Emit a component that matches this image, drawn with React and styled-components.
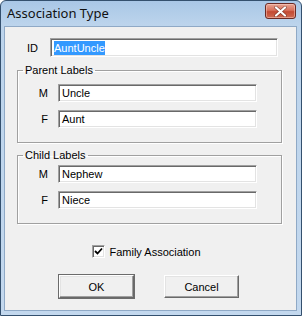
import React from "react";
import styled, { createGlobalStyle } from "styled-components";

const Global = createGlobalStyle`
  html, body { margin: 0; padding: 0; background: #ffffff; }
  * { box-sizing: border-box; }
`;

const Frame = styled.div`
  width: 302px;
  height: 316px;
  display: flex;
  flex-direction: column;
  border: 1px solid #34506e;
  border-radius: 6px 6px 0 0;
  background: linear-gradient(180deg, #a9c7e6 0px, #bcd4ec 24px, #c3d8ee 100%);
  padding: 0 4px 4px 3px;
  font-family: "Liberation Sans", Arial, sans-serif;
  font-size: 11px;
  color: #000;
`;

const TitleBar = styled.div`
  height: 25px;
  flex: none;
  display: flex;
  align-items: center;
  justify-content: space-between;
  padding: 0 1px 1px 3px;
`;

const Title = styled.span`
  font-family: "Noto Sans", "Open Sans", sans-serif;
  font-size: 13px;
  color: #111;
`;

const Close = styled.div`
  width: 31px;
  height: 16px;
  margin-top: -4px;
  border: 1px solid #6b2a24;
  border-radius: 3px;
  background: linear-gradient(180deg, #e8a493 0%, #d7705b 45%, #c34a33 55%, #cf6b53 100%);
  box-shadow: inset 0 0 0 1px rgba(255, 220, 210, 0.45);
  display: flex;
  align-items: center;
  justify-content: center;
`;

const Client = styled.div`
  flex: 1;
  background: #f0f0f0;
  border: 1px solid #8fa9c6;
  display: flex;
  flex-direction: column;
  padding: 11px 14px 0 12px;
`;

const Row = styled.div`
  display: flex;
  align-items: center;
`;

const Label = styled.span`
  width: ${(p) => p.$w}px;
  text-align: right;
  margin-right: ${(p) => p.$gap}px;
  flex: none;
`;

const Input = styled.div`
  width: ${(p) => p.$w}px;
  height: ${(p) => p.$h}px;
  background: #fff;
  border-top: 1px solid #a0a0a0;
  border-left: 1px solid #a0a0a0;
  border-right: 1px solid #ffffff;
  border-bottom: 1px solid #ffffff;
  box-shadow: inset 1px 1px 0 #696969, inset -1px -1px 0 #e3e3e3;
  display: flex;
  align-items: center;
  padding-left: 3px;
  white-space: nowrap;
`;

const Selected = styled.span`
  background: #3399ff;
  color: #fff;
  padding: 1px 0;
`;

const Group = styled.fieldset`
  margin: ${(p) => p.$mt}px 0 0 0;
  padding: ${(p) => p.$pt}px 0 14px 0;
  border: 1px solid #a0a0a0;
  box-shadow: inset 1px 1px 0 #ffffff, 1px 1px 0 #ffffff;
  display: flex;
  flex-direction: column;
  gap: 8px;
  min-width: 0;
`;

const Legend = styled.legend`
  padding: 0 2px;
  margin-left: 5px;
`;

const CheckRow = styled.div`
  display: flex;
  align-items: center;
  justify-content: center;
  margin-top: 21px;
  padding-right: 6px;
  gap: 4px;
`;

const Box = styled.div`
  width: 13px;
  height: 13px;
  background: #fff;
  border-top: 1px solid #a0a0a0;
  border-left: 1px solid #a0a0a0;
  border-right: 1px solid #fff;
  border-bottom: 1px solid #fff;
  box-shadow: inset 1px 1px 0 #696969, inset -1px -1px 0 #e3e3e3;
  display: flex;
  align-items: center;
  justify-content: center;
`;

const Buttons = styled.div`
  display: flex;
  justify-content: center;
  gap: 30px;
  margin-top: 17px;
  padding-right: 1px;
`;

const Button = styled.div`
  width: 75px;
  height: 23px;
  background: #f0f0f0;
  border-top: 1px solid #ffffff;
  border-left: 1px solid #ffffff;
  border-right: 1px solid #696969;
  border-bottom: 1px solid #696969;
  box-shadow: inset -1px -1px 0 #a0a0a0, inset 1px 1px 0 #e3e3e3;
  display: flex;
  align-items: center;
  justify-content: center;
  ${(p) => p.$default && `outline: 1px solid #6b6b6b; outline-offset: 0px;`}
`;

const Field = ({ label, value }) => (
  <Row>
    <Label $w={30} $gap={10}>{label}</Label>
    <Input $w={199} $h={18}>{value}</Input>
  </Row>
);

export default function App() {
  return (
    <>
      <Global />
      <Frame>
        <TitleBar>
          <Title>Association Type</Title>
          <Close>
            <svg width="13" height="11" viewBox="0 0 13 11">
              <path d="M2 1.5 L11 9.5 M11 1.5 L2 9.5" stroke="#4a1a14" strokeWidth="3.4" strokeLinecap="round" opacity="0.55" />
              <path d="M2 1.5 L11 9.5 M11 1.5 L2 9.5" stroke="#ffffff" strokeWidth="2.2" strokeLinecap="round" />
            </svg>
          </Close>
        </TitleBar>
        <Client>
          <Row>
            <Label $w={21} $gap={12}>ID</Label>
            <Input $w={228} $h={19}><Selected>AuntUncle</Selected></Input>
          </Row>
          <Group $mt={7} $pt={8}>
            <Legend>Parent Labels</Legend>
            <Field label="M" value="Uncle" />
            <Field label="F" value="Aunt" />
          </Group>
          <Group $mt={6} $pt={4}>
            <Legend>Child Labels</Legend>
            <Field label="M" value="Nephew" />
            <Field label="F" value="Niece" />
          </Group>
          <CheckRow>
            <Box>
              <svg width="9" height="9" viewBox="0 0 9 9">
                <path d="M1 4 L3.5 6.5 L8 1.5" stroke="#000" strokeWidth="1.8" fill="none" />
              </svg>
            </Box>
            <span>Family Association</span>
          </CheckRow>
          <Buttons>
            <Button $default>OK</Button>
            <Button>Cancel</Button>
          </Buttons>
        </Client>
      </Frame>
    </>
  );
}
